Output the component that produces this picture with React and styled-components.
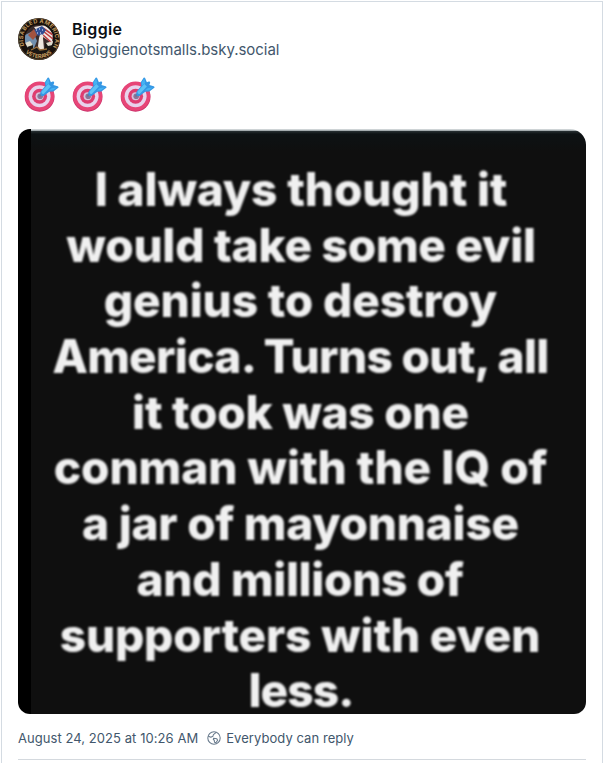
import React from "react";
import styled, { createGlobalStyle } from "styled-components";

const GlobalStyle = createGlobalStyle`
  *, *::before, *::after { box-sizing: border-box; }
  body { margin: 0; background: #fff; font-family: Inter, "Liberation Sans", sans-serif; }
`;

const Page = styled.main`
  height: 763px;
  padding: 1px 1px 0;
  overflow: hidden;
`;

const Card = styled.article`
  height: 780px;
  padding: 15px 16px 0;
  border: 1px solid #d4dbe2;
  border-bottom: 0;
`;

const Header = styled.header`
  display: flex;
  align-items: center;
  gap: 12px;
  height: 44px;
`;

const AvatarImage = styled.svg`
  display: block;
  flex: none;
  width: 42px;
  height: 42px;
`;

const Names = styled.div`
  display: flex;
  flex-direction: column;
`;

const DisplayName = styled.span`
  height: 21px;
  line-height: 21px;
  font-size: 16px;
  font-weight: 600;
  letter-spacing: 0.3px;
  color: #0b0f14;
`;

const Handle = styled.span`
  height: 20px;
  line-height: 20px;
  font-size: 15px;
  letter-spacing: -0.03px;
  color: #42576c;
`;

const EmojiRow = styled.div`
  display: flex;
  gap: 12px;
  padding: 16px 0 0 4.5px;
  height: 68px;
`;

const EmojiImage = styled.svg`
  display: block;
  width: 36px;
  height: 36px;
`;

const Photo = styled.figure`
  width: 568px;
  height: 585px;
  margin: 0;
  padding: 33px 18px 0 16px;
  overflow: hidden;
  border-radius: 12px 16px 12px 12px;
  background:
    linear-gradient(#000, #000) 0 0 / 13px 100% no-repeat,
    linear-gradient(#e3e7e9, #a4acaf 1.5px, #242c2f 2.5px, #0d1214 5px, #0f0f0f 22px);
`;

const QuoteLine = styled.div`
  display: flex;
  justify-content: center;
  height: 55.7px;
  line-height: 55.7px;
  font-size: 46px;
  font-weight: 800;
  letter-spacing: ${(p) => p.$track}px;
  white-space: pre;
  color: #f0f0f0;
  filter: blur(0.8px);
  transform: translateX(${(p) => p.$shift}px);
`;

const Footer = styled.footer`
  display: flex;
  align-items: center;
  height: 46px;
  padding-top: 3px;
  border-bottom: 1px solid #d4d9de;
  font-size: 13px;
  letter-spacing: 0.06px;
  color: #42576c;
  white-space: pre;
`;

const GlobeImage = styled.svg`
  display: block;
  width: 14px;
  height: 14px;
  margin: 0 5px 0 9px;
`;

const quote = [
  { text: "I always thought it", track: -0.15, shift: 0 },
  { text: "would take some evil", track: -0.25, shift: 0 },
  { text: "genius to destroy", track: -0.14, shift: -0.5 },
  { text: "America. Turns out, all", track: -0.7, shift: -0.5 },
  { text: "it took was one", track: -0.24, shift: -0.5 },
  { text: "conman with the IQ of", track: -0.06, shift: -0.5 },
  { text: "a jar of mayonnaise", track: -0.25, shift: -0.5 },
  { text: "and millions of", track: -0.33, shift: -1 },
  { text: "supporters with even", track: -0.2, shift: -1 },
  { text: "less.", track: -0.9, shift: 0 },
];

function Avatar() {
  return (
    <AvatarImage viewBox="0 0 42 42" aria-hidden="true">
      <defs>
        <clipPath id="seal"><circle cx="21" cy="21" r="14.2" /></clipPath>
        <path id="arcTop" d="M6.4 27.5A16 16 0 1 1 35.6 27.5" />
        <path id="arcBottom" d="M7.5 34.5A19 19 0 0 0 34.5 34.5" />
      </defs>
      <circle cx="21" cy="21" r="21" fill="#17100b" />
      <circle cx="21" cy="21" r="20.3" fill="none" stroke="#6f5638" strokeWidth=".7" />
      <g clipPath="url(#seal)">
        <rect x="6" y="6" width="30" height="30" fill="#3a2b2a" />
        <path d="M7 17l8-4 4 10-3 7H7z" fill="#718fae" />
        <path d="M16 9l11-2 8 7-1 11-12-8z" fill="#f0e8e5" />
        <path d="M25 10l10 7M25 13l10 8M25 17l9 8" stroke="#bd3d3e" strokeWidth="1.6" />
        <path d="M16 12l8-4 4 4-4 6-7-1z" fill="#304f94" />
        <path d="M10 17l6-6 3 6-4 5z" fill="#a3533f" />
        <path d="M18 12h1m2-1h1m2 1h1m-6 3h1m2 0h1" stroke="#eef1ff" strokeWidth="1.2" />
        <path d="M7 26h8v4h12v-5h8v12H7z" fill="#1a1714" />
        <path d="M7 25l5-2 3 4-6 2zM28 25l7-2v4l-5 1z" fill="#e0dccd" />
        <path d="M22 17c2-2 4 0 3 3l1 11-5 1-1-4 1-8z" fill="#eee7df" />
        <path d="M13 32l6-3 3 3 7-1" stroke="#9b713e" strokeWidth="1.3" fill="none" />
      </g>
      <g fill="#c29a5f" fontFamily="Inter, sans-serif" fontSize="5.6" fontWeight="700">
        <text textLength="65" lengthAdjust="spacing"><textPath href="#arcTop">DISABLED AMERICAN</textPath></text>
        <text textLength="29" lengthAdjust="spacing"><textPath href="#arcBottom">VETERANS</textPath></text>
      </g>
    </AvatarImage>
  );
}

function Target() {
  return (
    <EmojiImage viewBox="0 0 36 36" role="img" aria-label="direct hit">
      <circle cx="16.6" cy="19.8" r="14.9" fill="#c92f69" />
      <circle cx="16.6" cy="19.1" r="14.6" fill="#e74577" />
      <circle cx="16.6" cy="19.2" r="11" fill="#e8d3ec" />
      <circle cx="16.6" cy="19.2" r="7.5" fill="#de3d70" />
      <circle cx="16.6" cy="19.2" r="4" fill="#d5c4dc" />
      <circle cx="17.2" cy="19.2" r="2.8" fill="#8d7598" />
      <path d="M17 18.8L24 12" stroke="#66789b" strokeWidth="2" strokeLinecap="round" />
      <path d="M17.8 14.2L22.3 9 21.8 5.2 24.6.8q1-1 1.6.4l1.7 4.1 1.8-.7q1.7-.3 1.4 1.3l-.7 2.2 4.3 1.2q1.5.6.3 1.8l-4.6 3.4-4.1.3-5.4 4q-2 .8-3.2-.6-.9-1.5.1-3.7z" fill="#3597e4" />
      <path d="M18.3 14.8l7-7.8 2.6 2.4-7.2 7.5q-2 .5-2.4-2.1z" fill="#5cc2f6" />
      <path d="M22.6 5.6l2.6-4.1 1.1 4.6-3.3 2.6zM28.6 11.2l5.5-1-4 3-4.2.2z" fill="#45b2f3" />
    </EmojiImage>
  );
}

function Globe() {
  return (
    <GlobeImage viewBox="0 0 14 14" fill="none" stroke="#687a8c" strokeWidth="1.05" strokeLinejoin="round" aria-hidden="true">
      <circle cx="7" cy="7" r="6.2" />
      <path d="M1 5l2.8 1.3 2.1-1 .5-1.6L9.2 1.4M6.6 7.2l3.2.6.8 1.4-1.7 2.5-1.4-.5-.2-2-1-.7z" />
    </GlobeImage>
  );
}

export default function App() {
  return (
    <Page>
      <GlobalStyle />
      <Card>
        <Header>
          <Avatar />
          <Names>
            <DisplayName>Biggie</DisplayName>
            <Handle>@biggienotsmalls.bsky.social</Handle>
          </Names>
        </Header>
        <EmojiRow>
          <Target />
          <Target />
          <Target />
        </EmojiRow>
        <Photo>
          {quote.map((line) => (
            <QuoteLine key={line.text} $track={line.track} $shift={line.shift}>{line.text}</QuoteLine>
          ))}
        </Photo>
        <Footer>
          <span>August 24, 2025 at 10:26 AM</span>
          <Globe />
          <span>Everybody can reply</span>
        </Footer>
      </Card>
    </Page>
  );
}
